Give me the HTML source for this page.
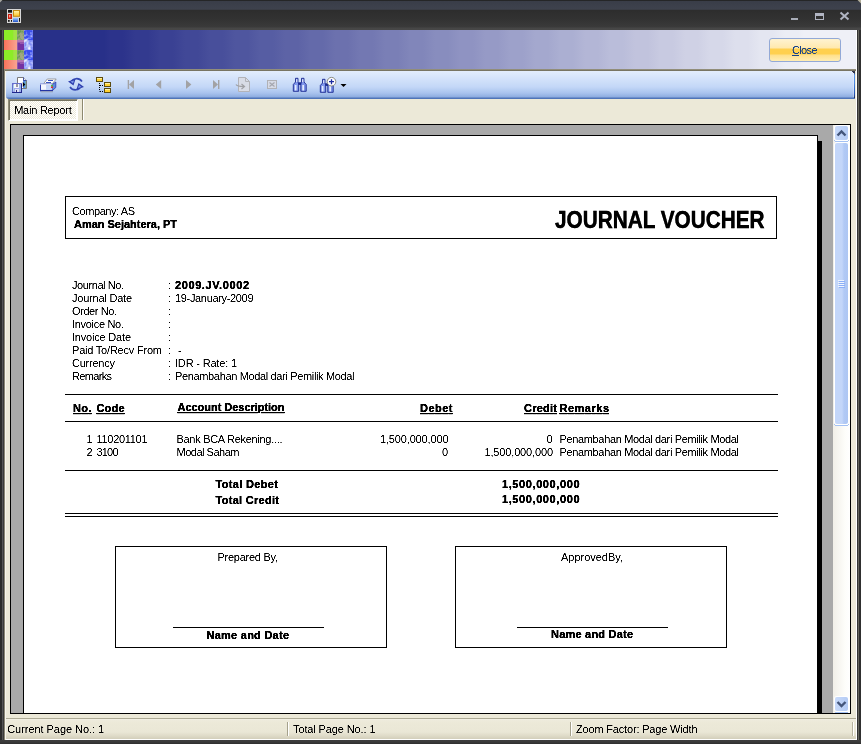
<!DOCTYPE html>
<html><head><meta charset="utf-8"><title>Journal Voucher</title>
<style>
html,body{margin:0;padding:0;}
body{width:861px;height:744px;overflow:hidden;position:relative;background:#ece9d8;font-family:"Liberation Sans", sans-serif;font-size:11px;color:#000;}
div,svg{position:absolute;}
#frame{left:0;top:0;width:861px;height:744px;background:linear-gradient(90deg,#2b2b2b 0,#2b2b2b 2px,#555 2px,#555 3px,#3b3b3b 3px,#3b3b3b 857px,#343434 857px,#343434 858px,#66665e 858px,#66665e 859px,#2f2f2f 859px);}
#fbot{left:0;top:740px;width:861px;height:4px;background:linear-gradient(#3d3d3d,#3a3a3a 2px,#2e2e2e 4px);}
#redge{left:856px;top:30px;width:1px;height:710px;background:#fff;}
#title{left:0;top:0;width:861px;height:30px;background:linear-gradient(#252627 0,#252627 1px,#393d48 1px,#3e424d 9px,#36383d 10px,#2d2d2d 10.500px,#323232 19px,#3a3a3a 27px,#464646 28px,#474747 30px);}
#client{left:4px;top:30px;width:853px;height:710px;background:#ece9d8;}
#banner{left:4px;top:30px;width:852px;height:39px;background:linear-gradient(90deg,#283089 0,#283089 100px,#2c338b 106px,#2c338b 119px,#333a8f 131px,#333a8f 144px,#3a4193 156px,#3a4193 169px,#414897 181px,#414897 194px,#484f9b 206px,#484f9b 219px,#4f569f 231px,#4f569f 244px,#565da3 256px,#565da3 269px,#5d63a6 281px,#5d63a6 294px,#646aaa 306px,#646aaa 319px,#6c71ae 331px,#6c71ae 344px,#7378b2 356px,#7378b2 369px,#7a7fb6 381px,#7a7fb6 394px,#8186ba 406px,#8186ba 419px,#888dbe 431px,#888dbe 444px,#8f93c2 456px,#8f93c2 469px,#969ac6 481px,#969ac6 494px,#9da1ca 506px,#9da1ca 519px,#a4a8ce 531px,#a4a8ce 544px,#abafd2 556px,#abafd2 569px,#b3b6d6 581px,#b3b6d6 594px,#babdda 606px,#babdda 619px,#c1c3dd 631px,#c1c3dd 644px,#c8cae1 656px,#c8cae1 669px,#cfd1e5 681px,#cfd1e5 694px,#d6d8e9 706px,#d6d8e9 719px,#dddfed 731px,#dddfed 744px,#e4e6f1 756px,#e4e6f1 769px,#ebedf5 781px,#ebedf5 794px,#eff0f7 800px,#eff0f7 852px);}
#bline{left:4px;top:69px;width:852px;height:2px;background:linear-gradient(#9e9a86,#6c6856);}
#ledge{left:4px;top:69px;width:1px;height:671px;background:#8a8674;}
#ledge2{left:5px;top:71px;width:1px;height:669px;background:#f7f5ec;}
#toolbar{left:6px;top:71px;width:849px;height:28px;border-radius:3px 0 0 3px;background:linear-gradient(#e3edfc 0,#d3e2fa 8px,#c3d7f7 16px,#a9c3ee 22px,#8dace0 26px,#4f74b8 27px,#4f74b8 28px);}
#close{left:769px;top:38px;width:70px;height:22px;border:1px solid #93a9d6;border-radius:3px;background:linear-gradient(#fff3d1 0,#ffe9ae 9px,#ffd04f 10px,#ffd04f 15px,#ffe08a 16px,#ffedb4 22px);color:#15428b;text-align:center;line-height:22px;}
#tab{left:8px;top:99px;width:66px;height:18px;border-top:2px solid #8f8c78;border-left:2px solid #8f8c78;border-right:2px solid #fff;border-bottom:2px solid #fff;background:#f6f4ea;box-sizing:content-box;}
#tabin{left:9px;top:100px;width:67px;height:19px;border-top:1px solid #74725f;border-left:1px solid #74725f;box-sizing:content-box;}
#tabsep{left:82px;top:99px;width:1px;height:21px;background:#8d896f;border-right:1px solid #fff;}
#viewer{left:10px;top:124px;width:839px;height:589px;border:1px solid #000;background:#a9a9a9;overflow:hidden;box-sizing:content-box;}
#page{left:23px;top:135px;width:793px;height:600px;border:1px solid #000;background:#fff;box-sizing:content-box;}
#shadow{left:818px;top:141px;width:4px;height:574px;background:#000;}
#vscroll{left:833px;top:125px;width:17px;height:588px;background:linear-gradient(90deg,#f1efe8,#fdfdfa 12px,#fff);}
.sbtn{left:2px;width:13px;height:14px;border-radius:2px;background:linear-gradient(90deg,#c8dafa,#b4cbf4);box-shadow:0 0 0 1px #fff;}
#thumb{left:2px;top:18px;width:13px;height:281px;border-radius:2px;background:linear-gradient(90deg,#c3d6f9 0,#c3d6f9 7px,#b1c9f5 9px,#adc6f3 13px);box-shadow:0 0 0 1px #fff;}
#status{left:6px;top:718px;width:850px;height:21px;background:linear-gradient(#aeab96 0,#aeab96 1px,#f5f3ea 1px,#eeebdc 2px,#ece9d8 5px,#eae7d6 14px,#dedac7 18px,#d2ceba 21px);border-bottom:1px solid #fff;border-right:1px solid #fff;box-sizing:content-box;}
.st{top:724px;height:13px;line-height:13px;white-space:pre;}
.ssep{top:722px;width:1px;height:14px;background:#a5a18c;border-right:1px solid #fff;}
</style></head><body>
<svg width="0" height="0" style="left:0;top:0"><defs><filter id="crisp" x="0" y="0" width="100%" height="100%" color-interpolation-filters="sRGB"><feComponentTransfer><feFuncA type="table" tableValues="0 0 0.6 1 1"/></feComponentTransfer></filter><filter id="gray" x="0" y="0" width="100%" height="100%" color-interpolation-filters="sRGB"><feComponentTransfer><feFuncA type="linear" slope="1.15"/></feComponentTransfer></filter><filter id="crispb" x="0" y="0" width="100%" height="100%" color-interpolation-filters="sRGB"><feComponentTransfer><feFuncA type="table" tableValues="0 0.5 1 1 1"/></feComponentTransfer></filter></defs></svg>
<div id="frame"></div>
<div id="title"></div>
<svg style="left:0;top:0" width="861" height="4"><path d="M0 0 H2.500 L0 2.500Z" fill="#a4a4a0"/><path d="M861 0 H857.500 L861 3.500Z" fill="#b4b09c"/></svg>
<svg style="left:6px;top:8px" width="16" height="16" viewBox="6 8 16 16">
<defs><linearGradient id="yg" x1="0" x2="0" y1="0" y2="1"><stop offset="0" stop-color="#fff2a8"/><stop offset="1" stop-color="#ffc62c"/></linearGradient>
<linearGradient id="bg2" x1="0" x2="0" y1="0" y2="1"><stop offset="0" stop-color="#9ccaff"/><stop offset="1" stop-color="#2454cc"/></linearGradient></defs>
<rect x="6.500" y="8.500" width="15" height="15" fill="#333" opacity=".5"/>
<rect x="7" y="9" width="14" height="14" fill="#d6d6d6"/>
<rect x="8" y="10" width="4" height="2.700" fill="#161616"/>
<rect x="13" y="10" width="7" height="6.800" fill="#c48c12"/><rect x="14" y="11" width="5" height="4.800" fill="url(#yg)"/>
<rect x="8" y="14" width="4" height="5" fill="#c81a0a"/><rect x="9" y="15" width="1.500" height="2.500" fill="#ff9a88"/>
<rect x="13" y="18" width="5" height="4" fill="url(#bg2)"/>
<rect x="8" y="20" width="1.700" height="1.800" fill="#161616"/><rect x="11" y="20" width="1" height="1.800" fill="#161616"/><rect x="19" y="18" width="1" height="3.800" fill="#161616"/>
</svg>
<svg style="left:786px;top:8px" width="70" height="16" viewBox="786 8 70 16">
<rect x="791" y="18" width="7" height="2" fill="#a9adb8"/>
<rect x="815.5" y="13.5" width="8" height="6" fill="none" stroke="#b1b5c2"/><rect x="815" y="13" width="9" height="3" fill="#b1b5c2"/>
<path d="M840.5 12.5 L848.5 19.5 M848.5 12.5 L840.5 19.5" stroke="#b1b5c2" stroke-width="2" fill="none"/>
</svg>
<div id="client"></div>
<div id="banner"></div>
<svg style="left:4px;top:30px" width="29" height="39" viewBox="0 0 29 39">
<defs><linearGradient id="rg" x1="0" x2="1" y1="0" y2="0"><stop offset="0" stop-color="#f8735a"/><stop offset=".45" stop-color="#f98a74"/><stop offset="1" stop-color="#f9a492"/></linearGradient>
<filter id="nz" x="0" y="0" width="100%" height="100%" color-interpolation-filters="sRGB"><feTurbulence type="fractalNoise" baseFrequency="0.22" numOctaves="2" seed="7"/><feColorMatrix type="matrix" values="0 0 0 0 1  0 0 0 0 1  0 0 0 0 1  2.6 0 0 0 -1.08"/><feComposite in2="SourceGraphic" operator="in"/></filter>
<filter id="nz2" x="0" y="0" width="100%" height="100%" color-interpolation-filters="sRGB"><feTurbulence type="fractalNoise" baseFrequency="0.3" numOctaves="2" seed="11"/><feColorMatrix type="matrix" values="0 0 0 0 0.37  0 0 0 0 0.6  0 0 0 0 0.3  0 3 0 0 -1.2"/><feComposite in2="SourceGraphic" operator="in"/></filter>
</defs>
<rect x="0" y="0" width="29" height="39" fill="#3a4ef0"/>
<g id="bt">
<rect x="0" y="0" width="13.300" height="10" fill="#8cec28"/><rect x="9.300" y="0" width="4" height="10" fill="#a2e246"/>
<rect x="13.300" y="0" width="6.700" height="10" fill="#a3a882"/>
<rect x="13.300" y="0" width="6.700" height="10" fill="#000" filter="url(#nz2)"/>
<rect x="20" y="0" width="9" height="10" fill="#3a4ef0"/>
<rect x="13.300" y="10" width="6.700" height="10" fill="#7432a2"/><rect x="13.300" y="10" width="6.700" height="2.500" fill="#b274b4"/><rect x="16" y="12.500" width="4" height="1.500" fill="#9a58ae"/>
<rect x="20" y="10" width="9" height="10" fill="#7f8df6"/>
<rect x="0" y="10" width="13.300" height="10" fill="url(#rg)"/>
<rect x="20" y="0" width="9" height="20" fill="#000" filter="url(#nz)"/>
</g>
<use href="#bt" y="20"/>
</svg>
<div id="fbot"></div><div id="redge"></div><div id="bline"></div><div id="ledge"></div><div id="ledge2"></div>
<div id="close"></div>
<div id="toolbar"></div><div style="left:854px;top:73px;width:1px;height:25px;background:linear-gradient(#2a3c6c 0,#5a98ee 2px,#4a86e0 10px,#1c4cb2 22px,#232a44 25px)"></div><div style="left:852px;top:71px;width:3px;height:1px;background:#34384c"></div><div style="left:854px;top:72px;width:1px;height:1px;background:#2a2e44"></div><div style="left:853px;top:72px;width:1px;height:1px;background:#2a2e44"></div><div style="left:853px;top:73px;width:1px;height:24px;background:rgba(255,255,255,.3)"></div>
<svg id="tbicons" style="left:6px;top:71px" width="400" height="28" viewBox="6 71 400 28">
<!-- export -->
<path d="M17.500 77.500 H23.500 L26.500 80.500 V88.500 H17.500Z" fill="#fff" stroke="#7a7a7a"/>
<rect x="23" y="80" width="3" height="8" fill="#5a8fe6"/><rect x="25.300" y="81" width=".7" height="7" fill="#7fc08a" opacity=".8"/><path d="M23.500 77.500 V80.500 H26.500" fill="#e8eefc" stroke="#1c2c8c" stroke-width=".8"/>
<path d="M22.800 82 L25.300 84.500 L22.800 87Z" fill="#000"/>
<rect x="12.500" y="83.500" width="9" height="9" fill="#a2aaee" stroke="#6670cc"/><rect x="12" y="92" width="10" height="1" fill="#20288c"/><rect x="21" y="84" width="1" height="9" fill="#20288c"/>
<rect x="14" y="84" width="5" height="4" fill="#f4f6fd"/><rect x="16" y="84" width="2" height="3" fill="#9a9aa2"/>
<rect x="15" y="89" width="4" height="3" fill="#dfe3f6"/><rect x="16" y="90" width="1" height="2" fill="#30307a"/>
<rect x="13" y="85" width="1" height="6" fill="#a9d0e8"/><rect x="19.500" y="85" width="1" height="6" fill="#9fc8e4"/>
<!-- print -->
<path d="M43.500 83.800 L47.300 79 H56.200 L52.300 83.800Z" fill="#fff" stroke="#8a8a8a" stroke-width=".8"/>
<rect x="48" y="80" width="5" height="1" fill="#3a54c0"/><rect x="46" y="82" width="5" height="1" fill="#3a54c0"/>
<path d="M52.500 84.300 L55.800 82 V87.500 L52.500 90.500Z" fill="#5f88dc" stroke="#2a3cac" stroke-width=".8"/>
<rect x="40.500" y="83.800" width="11.500" height="6.500" fill="#f3f6fe" stroke="#8a98d8" stroke-width=".9"/><rect x="40" y="85" width="1" height="5" fill="#3444b0"/>
<rect x="46" y="85" width="5" height="5" fill="#c6d6f6"/><rect x="40" y="90" width="13" height="1.300" fill="#2434a4"/>
<rect x="51" y="85" width="2" height="1.500" fill="#3ec23e"/><rect x="51" y="86.500" width="2" height="1.500" fill="#d83030"/>
<rect x="41" y="91.300" width="12" height="1" fill="#9aa2b4"/>
<!-- refresh -->
<path d="M71 82.500 C72.500 78, 79 77.200, 82 81.500" fill="none" stroke="#3448b4" stroke-width="1.600"/>
<path d="M68 81.500 L75.500 79 L73.500 85.500Z" fill="#2c3cac"/><path d="M70.500 81.500 L74 80.500 L73 83.500Z" fill="#7c98ea"/>
<path d="M81 86 C79.500 90.500, 73 91.300, 70 87" fill="none" stroke="#3448b4" stroke-width="1.600"/>
<path d="M84 87 L76.500 89.500 L78.500 83Z" fill="#2c3cac"/><path d="M81.500 87 L78 88 L79 85Z" fill="#7c98ea"/>
<!-- tree -->
<g stroke="#5c4c10" stroke-width="1" fill="#ffd234"><rect x="96.500" y="77.500" width="6" height="4"/><rect x="104.500" y="82.500" width="6" height="4"/><rect x="104.500" y="88.500" width="6" height="4"/></g>
<g fill="#fff0a0"><rect x="97" y="78" width="5" height="1"/><rect x="105" y="83" width="5" height="1"/><rect x="105" y="89" width="5" height="1"/></g>
<path d="M99.500 83 V91.500 M100 85.500 H104 M100 91.500 H104" fill="none" stroke="#000" stroke-dasharray="1 1"/>
<!-- nav disabled -->
<g fill="#a2a2a4">
<rect x="127.700" y="80" width="1.400" height="9"/><path d="M134 80 L129 84.500 L134 89Z"/>
<path d="M161.200 80 L155.800 84.500 L161.200 89Z"/>
<path d="M186 80 L191.400 84.500 L186 89Z"/>
<path d="M213 80 L218 84.500 L213 89Z"/><rect x="218" y="80" width="1.400" height="9"/>
</g>
<!-- goto page disabled -->
<path d="M238.500 77.500 H245.500 L249.500 81.500 V91.500 H238.500Z" fill="#d9dce6" stroke="#b2b3b8"/><path d="M245.500 77.500 V81.500 H249.500" fill="none" stroke="#b2b3b8"/>
<path d="M236 84.500 C237 86.500, 240 86.500, 244 86.500 M241.500 84 L244.500 86.500 L241.500 89" fill="none" stroke="#a0a0a4" stroke-width="1.200"/>
<!-- stop disabled -->
<rect x="267.500" y="80.500" width="9" height="8" fill="#d6dae6" stroke="#b0b1b6"/><path d="M269.500 82.500 L274.500 86.500 M274.500 82.500 L269.500 86.500" stroke="#a4a6ae" fill="none" stroke-width="1.200"/>
<!-- binoculars -->
<g id="bino">
<path d="M295.500 78.300 H298 V82 L298.700 84 V91.300 H293.300 V84.500 L295.500 82Z" fill="#7f96ea" stroke="#1a2890" stroke-width=".9"/>
<path d="M301.500 78.300 H304 V82 L306.200 84.500 V91.300 H300.800 V84 L301.500 82Z" fill="#7f96ea" stroke="#1a2890" stroke-width=".9"/>
<rect x="294.800" y="85" width="1.700" height="5.500" fill="#e4ebfd"/><rect x="302.300" y="85" width="1.700" height="5.500" fill="#e4ebfd"/>
<rect x="296.200" y="79.200" width="1.100" height="2.800" fill="#eef2fe"/><rect x="302.200" y="79.200" width="1.100" height="2.800" fill="#eef2fe"/>
<rect x="298.400" y="82.300" width="2.700" height="2.600" fill="#1a2890"/>
</g>
<use href="#bino" x="27" y="1"/>
<circle cx="331.500" cy="81.700" r="4.300" fill="#fff" stroke="#8c8c84" stroke-width="1"/><path d="M329 81.700 H334 M331.500 79.200 V84.200" stroke="#1c2ca0" stroke-width="1.300"/>
<path d="M340.500 84 H346.500 L343.500 87Z" fill="#000"/>
</svg>
<div id="tab"></div><div id="tabin"></div>
<svg style="left:10px;top:101px" width="66" height="18"><defs><pattern id="dots" width="2" height="2" patternUnits="userSpaceOnUse"><rect width="2" height="2" fill="#fff"/><rect width="1" height="1" fill="#ece9d8"/><rect x="1" y="1" width="1" height="1" fill="#ece9d8"/></pattern></defs><rect width="66" height="18" fill="url(#dots)"/></svg>
<div id="tabsep"></div>
<div id="viewer"></div>
<div id="page"></div>
<div id="shadow"></div>
<div style="left:11px;top:713px;width:839px;height:1px;background:#000"></div>
<div style="left:10px;top:714px;width:842px;height:4px;background:#ece9d8"></div>
<div id="vscroll">
<div class="sbtn" style="top:1px"></div>
<div id="thumb"></div>
<div class="sbtn" style="top:572px"></div>
<svg style="left:0;top:0" width="17" height="588">
<path d="M4.500 10.500 L8.500 6.500 L12.500 10.500" fill="none" stroke="#43557a" stroke-width="2.400"/>
<path d="M4.500 577 L8.500 581 L12.500 577" fill="none" stroke="#43557a" stroke-width="2.400"/>
<g fill="#a3c1f3"><rect x="2" y="16" width="13" height="1"/><rect x="1" y="15" width="1" height="1"/><rect x="15" y="15" width="1" height="1"/><rect x="2" y="300" width="13" height="1"/><rect x="1" y="299" width="1" height="1"/><rect x="15" y="299" width="1" height="1"/><rect x="2" y="587" width="13" height="1"/></g>
<g fill="#eef4fe"><rect x="5" y="155" width="6" height="1"/><rect x="5" y="157" width="6" height="1"/><rect x="5" y="159" width="6" height="1"/><rect x="5" y="161" width="6" height="1"/></g>
<g fill="#8cb0f8"><rect x="6" y="156" width="6" height="1"/><rect x="6" y="158" width="6" height="1"/><rect x="6" y="160" width="6" height="1"/><rect x="6" y="162" width="6" height="1"/></g>
</svg>
</div>
<div id="status"></div>
<div class="ssep" style="left:287px"></div>
<div class="ssep" style="left:570px"></div>
<div style="left:852px;top:722px;width:1px;height:14px;background:#b8b4a0"></div><div style="left:853px;top:722px;width:1px;height:14px;background:#fff"></div>
<svg id="report" style="left:0;top:0" width="861" height="744" viewBox="0 0 861 744" font-family='"Liberation Sans", sans-serif' font-size="11" fill="#000">
<g filter="url(#crisp)">
<rect x="65.5" y="196.5" width="711" height="42" fill="none" stroke="#000"/>
<text x="72" y="215" textLength="63" lengthAdjust="spacing">Company: AS</text>
<text x="72" y="289" textLength="52" lengthAdjust="spacing">Journal No.</text>
<text x="167.9" y="289">:</text>
<text x="72" y="302" textLength="60" lengthAdjust="spacing">Journal Date</text>
<text x="167.9" y="302">:</text>
<text x="72" y="315" textLength="45" lengthAdjust="spacing">Order No.</text>
<text x="167.9" y="315">:</text>
<text x="72" y="328" textLength="52" lengthAdjust="spacing">Invoice No.</text>
<text x="167.9" y="328">:</text>
<text x="72" y="341" textLength="59" lengthAdjust="spacing">Invoice Date</text>
<text x="167.9" y="341">:</text>
<text x="72" y="354" textLength="90" lengthAdjust="spacing">Paid To/Recv From</text>
<text x="167.9" y="354">:</text>
<text x="72" y="367" textLength="43" lengthAdjust="spacing">Currency</text>
<text x="167.9" y="367">:</text>
<text x="72" y="380" textLength="40" lengthAdjust="spacing">Remarks</text>
<text x="167.9" y="380">:</text>
<text x="175" y="302" textLength="78.5" lengthAdjust="spacing">19-January-2009</text>
<text x="178" y="354">-</text>
<text x="175" y="367" textLength="62" lengthAdjust="spacing">IDR - Rate: 1</text>
<text x="175" y="380" textLength="179.5" lengthAdjust="spacing">Penambahan Modal dari Pemilik Modal</text>
<rect x="65" y="394" width="713" height="1" fill="#000"/>
<rect x="65" y="421" width="713" height="1" fill="#000"/>
<rect x="65" y="470" width="713" height="1" fill="#000"/>
<rect x="65" y="513" width="713" height="1" fill="#000"/>
<rect x="65" y="516" width="713" height="1" fill="#000"/>
<text x="86.5" y="443">1</text>
<text x="96.5" y="443" textLength="51" lengthAdjust="spacing">110201101</text>
<text x="176.5" y="443" textLength="106" lengthAdjust="spacing">Bank BCA Rekening....</text>
<text x="380" y="443" textLength="68.5" lengthAdjust="spacing">1,500,000,000</text>
<text x="546.5" y="443">0</text>
<text x="559.5" y="443" textLength="179.5" lengthAdjust="spacing">Penambahan Modal dari Pemilik Modal</text>
<text x="86.5" y="456">2</text>
<text x="96.5" y="456" textLength="22" lengthAdjust="spacing">3100</text>
<text x="176.5" y="456" textLength="63" lengthAdjust="spacing">Modal Saham</text>
<text x="442" y="456">0</text>
<text x="484.5" y="456" textLength="68.5" lengthAdjust="spacing">1,500,000,000</text>
<text x="559.5" y="456" textLength="179.5" lengthAdjust="spacing">Penambahan Modal dari Pemilik Modal</text>
<rect x="115.5" y="546.5" width="271" height="101" fill="none" stroke="#000"/>
<rect x="455.5" y="546.5" width="271" height="101" fill="none" stroke="#000"/>
<text x="217.5" y="561" textLength="60.5" lengthAdjust="spacing">Prepared By,</text>
<text x="561" y="561" textLength="62" lengthAdjust="spacing">ApprovedBy,</text>
<rect x="173" y="627" width="151" height="1" fill="#000"/>
<rect x="517" y="627" width="151" height="1" fill="#000"/>
<text x="14.2" y="114" textLength="57.5" lengthAdjust="spacing">Main Report</text>
<text x="7.2" y="733" textLength="97" lengthAdjust="spacing">Current Page No.: 1</text>
<text x="293" y="733" textLength="82.5" lengthAdjust="spacing">Total Page No.: 1</text>
<text x="576" y="733" textLength="121.5" lengthAdjust="spacing">Zoom Factor: Page Width</text>
<text x="792" y="54" textLength="25.5" lengthAdjust="spacing" fill="#15428b">Close</text>
<rect x="792" y="55" width="7" height="1" fill="#15428b"/>
</g>
<g filter="url(#crispb)">
<text x="74" y="228" textLength="103" lengthAdjust="spacing" font-weight="bold">Aman Sejahtera, PT</text>
<text x="175" y="289" textLength="74" lengthAdjust="spacing" font-weight="bold">2009.JV.0002</text>
<text x="73" y="412" textLength="18.5" lengthAdjust="spacing" font-weight="bold" text-decoration="underline">No.</text>
<text x="96.5" y="412" textLength="28" lengthAdjust="spacing" font-weight="bold" text-decoration="underline">Code</text>
<text x="177.5" y="411" textLength="107" lengthAdjust="spacing" font-weight="bold" text-decoration="underline">Account Description</text>
<text x="420" y="412" textLength="32.5" lengthAdjust="spacing" font-weight="bold" text-decoration="underline">Debet</text>
<text x="524" y="412" textLength="33" lengthAdjust="spacing" font-weight="bold" text-decoration="underline">Credit</text>
<text x="559.5" y="412" textLength="49.5" lengthAdjust="spacing" font-weight="bold" text-decoration="underline">Remarks</text>
<text x="215.5" y="488" textLength="62.5" lengthAdjust="spacing" font-weight="bold">Total Debet</text>
<text x="215.5" y="504" textLength="63.5" lengthAdjust="spacing" font-weight="bold">Total Credit</text>
<text x="502" y="488" textLength="77.5" lengthAdjust="spacing" font-weight="bold">1,500,000,000</text>
<text x="502" y="503" textLength="77.5" lengthAdjust="spacing" font-weight="bold">1,500,000,000</text>
<text x="206.5" y="639" textLength="82.5" lengthAdjust="spacing" font-weight="bold">Name and Date</text>
<text x="551" y="638" textLength="82" lengthAdjust="spacing" font-weight="bold">Name and Date</text>
</g>
<g filter="url(#gray)">
<text x="555" y="228" font-size="23.2" font-weight="bold" stroke="#000" stroke-width="0.4" textLength="209.5" lengthAdjust="spacingAndGlyphs">JOURNAL VOUCHER</text>
</g>
</svg>
</body></html>
